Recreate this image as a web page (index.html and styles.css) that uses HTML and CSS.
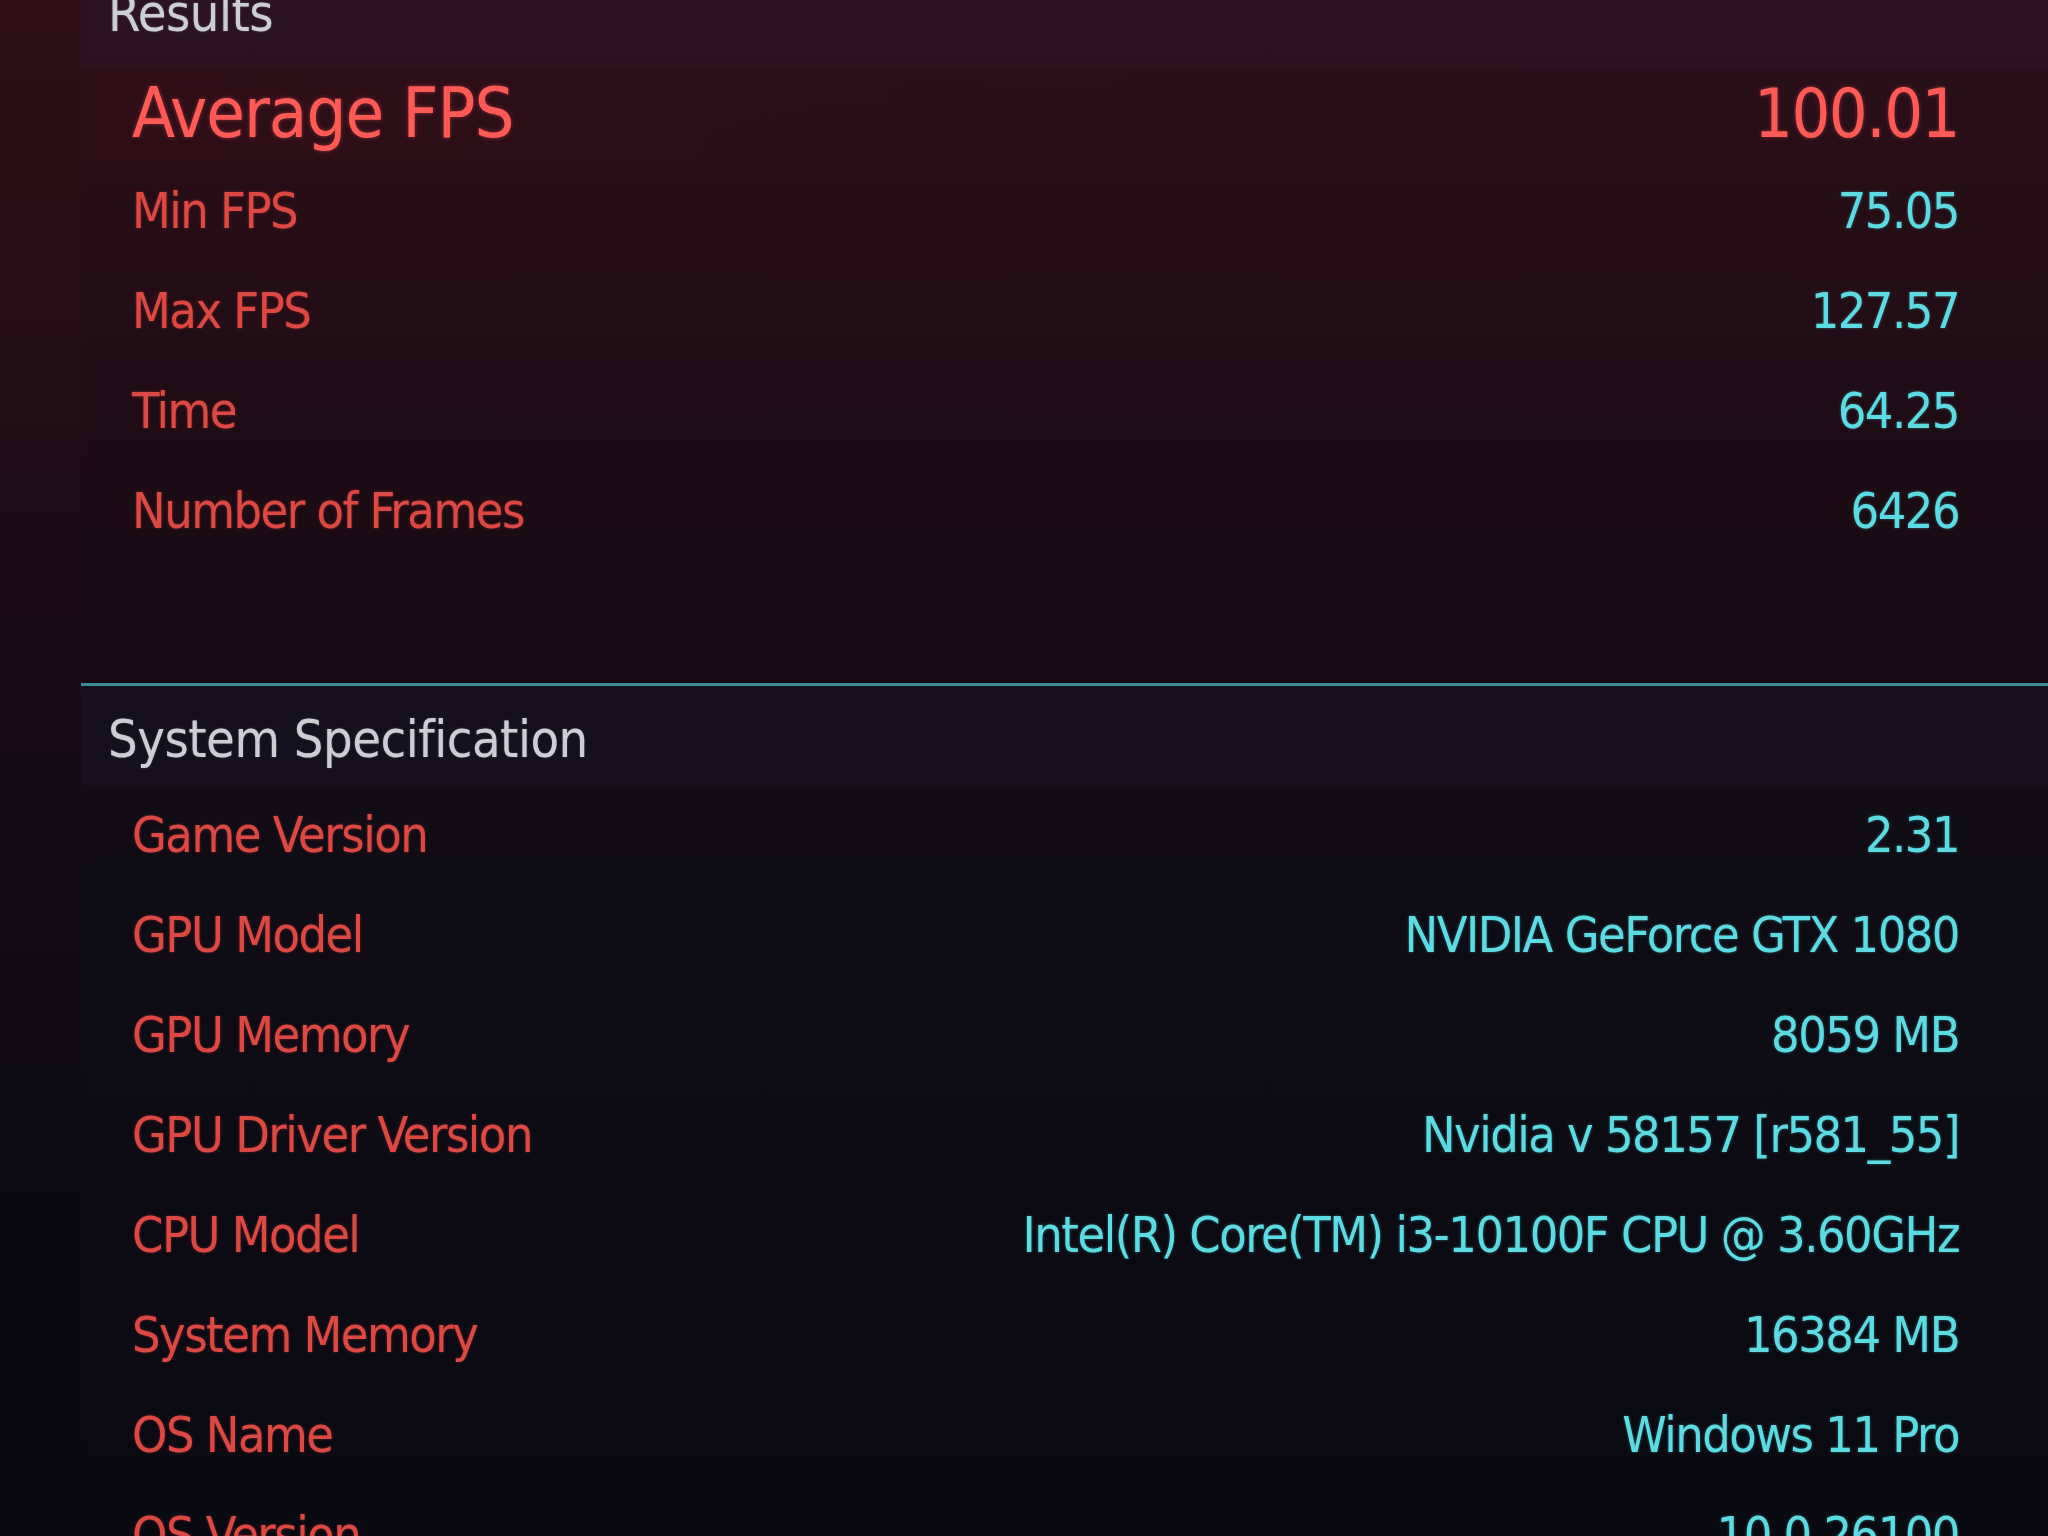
FILE: index.html
```html
<!DOCTYPE html>
<html lang="en">
<head>
<meta charset="utf-8">
<title>Benchmark Results</title>
<link rel="stylesheet" href="styles.css">
</head>
<body>
<main class="panel">
  <section class="results">
    <h2 class="section-title">Results</h2>
    <div class="row row-main">
      <span class="label">Average FPS</span>
      <span class="value">100.01</span>
    </div>
    <div class="row"><span class="label">Min FPS</span><span class="value">75.05</span></div>
    <div class="row"><span class="label">Max FPS</span><span class="value">127.57</span></div>
    <div class="row"><span class="label">Time</span><span class="value">64.25</span></div>
    <div class="row"><span class="label">Number of Frames</span><span class="value">6426</span></div>
  </section>
  <section class="spec">
    <h2 class="section-title">System Specification</h2>
    <div class="row"><span class="label">Game Version</span><span class="value">2.31</span></div>
    <div class="row"><span class="label">GPU Model</span><span class="value">NVIDIA GeForce GTX 1080</span></div>
    <div class="row"><span class="label">GPU Memory</span><span class="value">8059 MB</span></div>
    <div class="row"><span class="label">GPU Driver Version</span><span class="value">Nvidia v 58157 [r581_55]</span></div>
    <div class="row"><span class="label">CPU Model</span><span class="value">Intel(R) Core(TM) i3-10100F CPU @ 3.60GHz</span></div>
    <div class="row"><span class="label">System Memory</span><span class="value">16384 MB</span></div>
    <div class="row"><span class="label">OS Name</span><span class="value">Windows 11 Pro</span></div>
    <div class="row"><span class="label">OS Version</span><span class="value">10.0.26100</span></div>
  </section>
</main>
</body>
</html>
```

FILE: styles.css
```css
html {
  height: 100%;
  background: linear-gradient(180deg, #2e0f15 0%, #250e16 22%, #190b13 42%, #110a12 58%, #0b0a11 75%, #08080e 100%);
}

body {
  margin: 0;
  height: 1536px;
  overflow: hidden;
  font-family: "DejaVu Sans Condensed", "Liberation Sans", sans-serif;
}

.panel {
  margin-left: 81px;
  margin-top: -31px;
  display: flex;
  flex-direction: column;
}

.section-title {
  margin: 0;
  box-sizing: border-box;
  display: flex;
  align-items: center;
  padding-left: 27px;
  font-size: 52px;
  letter-spacing: -0.5px;
  font-weight: 400;
  color: #cdcdd4;
  text-shadow: 0 0 2px rgba(210, 210, 220, 0.35);
}

.results {
  background: linear-gradient(180deg, rgba(40, 16, 26, 0.9) 0%, rgba(36, 13, 22, 0.75) 40%, rgba(24, 11, 19, 0.6) 80%, rgba(21, 11, 19, 0.6) 100%);
  padding-bottom: 122px;
}

.results .section-title {
  height: 100px;
  padding-bottom: 12px;
  background: rgba(44, 22, 34, 0.75);
}

.spec {
  border-top: 3px solid #3a8d98;
  background: linear-gradient(180deg, rgba(15, 13, 22, 0.8) 0%, rgba(10, 10, 18, 0.7) 100%);
}

.spec .section-title {
  height: 99px;
  padding-top: 6px;
  background: rgba(21, 18, 30, 0.85);
}

.row {
  height: 100px;
  display: flex;
  align-items: center;
  justify-content: space-between;
  padding-left: 51px;
  padding-right: 89px;
  font-size: 50px;
  letter-spacing: -1.5px;
}

.label {
  color: #dc4842;
  text-shadow: 0 0 3px rgba(220, 60, 60, 0.45);
}

.value {
  color: #5cdbe3;
  text-shadow: 0 0 3px rgba(80, 210, 220, 0.45);
}

.row-main {
  height: 96px;
  margin-top: -4px;
  background: linear-gradient(90deg, rgba(60, 14, 22, 0.35), rgba(50, 14, 22, 0.15) 60%, rgba(50, 14, 22, 0.05));
}

.row-main .label {
  font-size: 70px;
  letter-spacing: -1px;
  color: #ff5a55;
  text-shadow: 0 0 4px rgba(255, 80, 80, 0.45);
}

.row-main .value {
  font-size: 68px;
  letter-spacing: -1.5px;
  color: #ff5a55;
  text-shadow: 0 0 4px rgba(255, 80, 80, 0.45);
}
```
